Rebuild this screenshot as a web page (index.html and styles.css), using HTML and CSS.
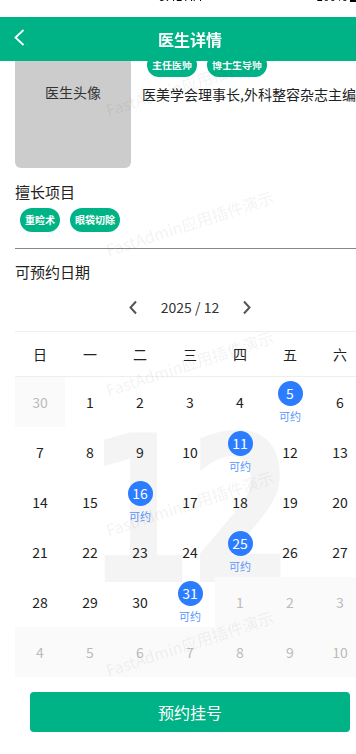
FILE: index.html
```html
<!DOCTYPE html>
<html>
<head>
    <meta charset="utf-8">
    <link rel="stylesheet" href="styles.css">
</head>
<body>
    <div class="page">
        <div class="topbar">
            <div class="status">
                <div class="status-inner">
                    <span class="signal">●●●●●</span>
                    <span>9:41 AM</span>
                    <span class="battery">100% <i></i></span>
                </div>
            </div>
            <div class="navbar">
                <div class="back">
                    <svg width="11" height="17" viewBox="0 0 11 17"><polyline points="9.5,1 1.5,8.5 9.5,16" fill="none" stroke="#fff" stroke-width="1.8"/></svg>
                </div>
                <div class="nav-title">医生详情</div>
                <div></div>
            </div>
        </div>

        <div class="main">
            <!-- 医生信息 -->
            <div class="doctor">
                <div class="avatar">医生头像</div>
                <div class="doctor-info">
                    <div class="tags">
                        <span class="tag">主任医师</span>
                        <span class="tag">博士生导师</span>
                    </div>
                    <div class="intro">医美学会理事长,外科整容杂志主编</div>
                </div>
            </div>

            <div class="section-title skill-title">擅长项目</div>
            <div class="tags skill-tags">
                <span class="tag">重睑术</span>
                <span class="tag">眼袋切除</span>
            </div>

            <div class="divider"></div>

            <div class="section-title date-title">可预约日期</div>

            <!-- 日历 -->
            <div class="calendar">
                <div class="cal-nav">
                    <svg width="10" height="15" viewBox="0 0 10 15"><polyline points="8,1.5 2.5,7.5 8,13.5" fill="none" stroke="#555" stroke-width="2"/></svg>
                    <span class="cal-month">2025 / 12</span>
                    <svg width="10" height="15" viewBox="0 0 10 15"><polyline points="2,1.5 7.5,7.5 2,13.5" fill="none" stroke="#555" stroke-width="2"/></svg>
                </div>
                <div class="week">
                    <span>日</span><span>一</span><span>二</span><span>三</span><span>四</span><span>五</span><span>六</span>
                </div>
                <div class="days">
                    <div class="big-num">12</div>
                    <div class="day other">30</div>
                    <div class="day">1</div>
                    <div class="day">2</div>
                    <div class="day">3</div>
                    <div class="day">4</div>
                    <div class="day free"><b>5</b><small>可约</small></div>
                    <div class="day">6</div>

                    <div class="day">7</div>
                    <div class="day">8</div>
                    <div class="day">9</div>
                    <div class="day">10</div>
                    <div class="day free"><b>11</b><small>可约</small></div>
                    <div class="day">12</div>
                    <div class="day">13</div>

                    <div class="day">14</div>
                    <div class="day">15</div>
                    <div class="day free"><b>16</b><small>可约</small></div>
                    <div class="day">17</div>
                    <div class="day">18</div>
                    <div class="day">19</div>
                    <div class="day">20</div>

                    <div class="day">21</div>
                    <div class="day">22</div>
                    <div class="day">23</div>
                    <div class="day">24</div>
                    <div class="day free"><b>25</b><small>可约</small></div>
                    <div class="day">26</div>
                    <div class="day">27</div>

                    <div class="day">28</div>
                    <div class="day">29</div>
                    <div class="day">30</div>
                    <div class="day free"><b>31</b><small>可约</small></div>
                    <div class="day other">1</div>
                    <div class="day other">2</div>
                    <div class="day other">3</div>

                    <div class="day other">4</div>
                    <div class="day other">5</div>
                    <div class="day other">6</div>
                    <div class="day other">7</div>
                    <div class="day other">8</div>
                    <div class="day other">9</div>
                    <div class="day other">10</div>
                </div>
            </div>

            <button class="book">预约挂号</button>
        </div>

        <!-- 水印 -->
        <div class="watermark">
            <span>FastAdmin应用插件演示</span>
            <span>FastAdmin应用插件演示</span>
            <span>FastAdmin应用插件演示</span>
            <span>FastAdmin应用插件演示</span>
            <span>FastAdmin应用插件演示</span>
        </div>
    </div>
</body>
</html>
```

FILE: styles.css
```css
html, body {
    margin: 0;
    padding: 0;
    overflow: hidden;
    background: #fff;
}
body {
    font-family: "Noto Sans CJK SC", "Noto Sans", sans-serif;
    color: #333;
}
.page {
    width: 380px;
    position: relative;
}

.topbar {
    position: fixed;
    top: 0;
    left: 0;
    width: 380px;
    z-index: 10;
}
.status {
    height: 17px;
    overflow: hidden;
    background: #fff;
}
.status-inner {
    display: flex;
    justify-content: space-between;
    align-items: center;
    padding: 0 10px;
    margin-top: -11px;
    height: 14px;
    font-size: 12px;
    line-height: 14px;
    color: #000;
}
.signal {
    font-size: 7px;
}
.battery i {
    display: inline-block;
    width: 20px;
    height: 9px;
    background: #000;
    vertical-align: middle;
}
.navbar {
    height: 44px;
    background: #00b386;
    display: grid;
    grid-template-columns: 1fr auto 1fr;
    align-items: center;
}
.back {
    padding-left: 14px;
    display: flex;
    align-items: center;
    margin-top: -4px;
}
.nav-title {
    color: #fff;
    font-size: 16px;
    font-weight: 700;
}

.main {
    padding: 16px 15px 0;
    width: 350px;
}

.doctor {
    display: flex;
    gap: 11px;
}
.avatar {
    width: 116px;
    height: 152px;
    flex-shrink: 0;
    background: #cccccc;
    border-radius: 6px;
    display: flex;
    align-items: center;
    justify-content: center;
    font-size: 14px;
    color: #333;
}
.doctor-info {
    padding-top: 37px;
    min-width: 0;
}
.tags {
    display: flex;
}
.tag {
    height: 24px;
    line-height: 24px;
    padding: 0 5px;
    margin: 0 5px;
    border-radius: 12px;
    background: #00b386;
    color: #fff;
    font-size: 10px;
    font-weight: 700;
    white-space: nowrap;
}
.intro {
    margin-top: 7px;
    font-size: 14px;
    line-height: 20px;
    white-space: nowrap;
    color: #222;
}

.section-title {
    font-size: 15px;
    line-height: 22px;
    color: #222;
}
.skill-title {
    margin-top: 13px;
}
.skill-tags {
    margin-top: 5px;
}
.divider {
    margin-top: 16px;
    height: 1px;
    background: #888;
}
.date-title {
    margin-top: 12px;
}

.calendar {
    width: 350px;
}
.cal-nav {
    height: 48px;
    display: flex;
    align-items: center;
    justify-content: center;
    gap: 23px;
    border-bottom: 1px solid #eee;
}
.cal-month {
    font-size: 14px;
    color: #333;
}
.week {
    display: grid;
    grid-template-columns: repeat(7, 50px);
    height: 44px;
    align-items: center;
    text-align: center;
    font-size: 14px;
    color: #222;
    border-bottom: 1px solid #eee;
}
.days {
    position: relative;
    display: grid;
    grid-template-columns: repeat(7, 50px);
    grid-auto-rows: 50px;
}
.big-num {
    position: absolute;
    left: 0;
    right: 0;
    top: 32px;
    text-align: center;
    font-family: "DejaVu Sans", sans-serif;
    font-size: 205px;
    line-height: 205px;
    font-weight: 700;
    letter-spacing: -6px;
    color: #f4f4f4;
    transform: translateX(-2px) scaleX(0.74);
}
.day {
    position: relative;
    display: flex;
    flex-direction: column;
    align-items: center;
    justify-content: center;
    font-size: 14px;
    color: #222;
}
.day.other {
    background: #fafafa;
    color: #bbb;
}
.day.free b {
    width: 25px;
    height: 25px;
    line-height: 25px;
    border-radius: 50%;
    background: #2b7cff;
    color: #fff;
    text-align: center;
    font-weight: 400;
    margin-bottom: 3px;
}
.day.free small {
    font-size: 11px;
    line-height: 14px;
    color: #5a96ff;
}

.book {
    display: block;
    width: 320px;
    height: 40px;
    margin: 15px 15px 0;
    border: none;
    border-radius: 4px;
    background: #00b386;
    color: #fff;
    font-family: inherit;
    font-size: 16px;
}

.watermark {
    position: fixed;
    top: 0;
    left: 0;
    width: 380px;
    padding-top: 73px;
    display: flex;
    flex-direction: column;
    align-items: center;
    gap: 120px;
    pointer-events: none;
    z-index: 5;
}
.watermark span {
    display: block;
    line-height: 20px;
    font-size: 16px;
    color: rgba(0, 0, 0, 0.05);
    transform: rotate(-18deg);
    white-space: nowrap;
}
```
